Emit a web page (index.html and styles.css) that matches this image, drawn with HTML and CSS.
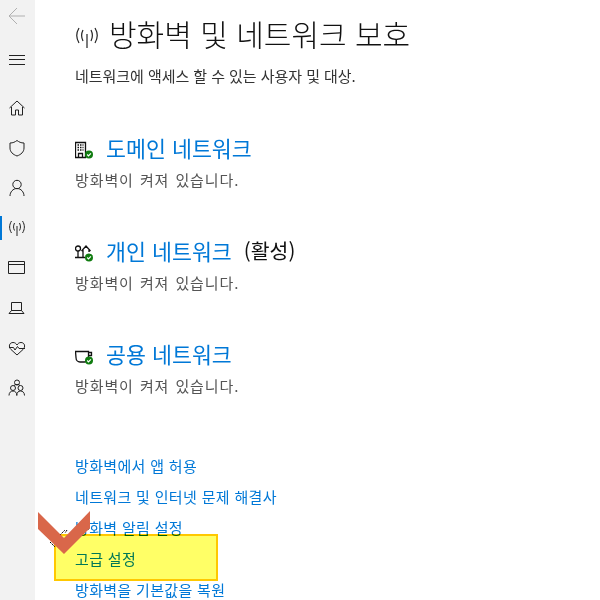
FILE: index.html
```html
<!DOCTYPE html>
<html lang="ko">
<head>
    <meta charset="UTF-8">
    <title>방화벽 및 네트워크 보호</title>
    <link rel="stylesheet" href="styles.css">
</head>
<body>
    <nav class="sidebar">
        <svg class="nav-icon back" viewBox="0 0 20 20"><path d="M18 10H2M10 2l-8 8 8 8"/></svg>
        <svg class="nav-icon menu" viewBox="0 0 18 18"><path d="M1 3.500h16M1 7.500h16M1 12.500h16"/></svg>
        <svg class="nav-icon home" viewBox="0 0 18 18"><path d="M1.500 9l7.500-7 7.500 7M3.500 8v8h4v-5h3v5h4V8"/></svg>
        <svg class="nav-icon" viewBox="0 0 18 18"><path d="M2 4c3 0 5-1 7-2.500C11 3 13 4 16 4v5c0 4-3 6.500-7 8-4-1.500-7-4-7-8z"/></svg>
        <svg class="nav-icon" viewBox="0 0 18 18"><circle cx="9" cy="5.500" r="4.200"/><path d="M2 17c0-4 3-7.500 7-7.500s7 3.500 7 7.500"/></svg>
        <div class="nav-active"><svg class="nav-icon" viewBox="0 0 18 18"><path d="M9 7v10M6.500 4c-1.300 3-1.300 5 0 7.500M11.500 4c1.300 3 1.300 5 0 7.500M3.500 2c-2.500 4-2.500 8 0 12M14.500 2c2.500 4 2.500 8 0 12"/></svg></div>
        <svg class="nav-icon" viewBox="0 0 18 18"><path d="M.5 2.500h16v12H.5zM.5 5.500h16"/></svg>
        <svg class="nav-icon" viewBox="0 0 18 18"><path d="M3.500 3.500h10v8h-10zM1 14.500h15l-2.500-3h-10z"/></svg>
        <svg class="nav-icon" viewBox="0 0 18 18"><path d="M9 16L3 10.500C0 7.500 1.500 3.500 5 3.500c2 0 3 1 4 2.500 1-1.500 2-2.500 4-2.500 3.500 0 5 4 2 7zM1 8.500h4.500L7 11l2.500-3.500L11 9.500h6"/></svg>
        <svg class="nav-icon" viewBox="0 0 18 18"><circle cx="9" cy="3.500" r="2.500"/><circle cx="5" cy="9" r="2.500"/><circle cx="12.500" cy="9" r="2.500"/><path d="M1 16.500c0-3 1.800-4.500 4-4.500s3.800 1.500 3.800 4.500M8.800 16.500c0-3 1.500-4.500 3.700-4.500s4 1.500 4 4.500M6 6.500c.8-.7 1.700-1 3-1s2.200.3 3 1"/></svg>
    </nav>

    <main class="content">
        <h1 class="page-title">
            <svg class="title-icon" viewBox="0 0 24 24"><path d="M12 9v14M8 5c-2 4-2 7 0 11M16 5c2 4 2 7 0 11M4 3c-3 5-3 10 0 15M20 3c3 5 3 10 0 15"/></svg>
            방화벽 및 네트워크 보호
        </h1>
        <p class="page-desc">네트워크에 액세스 할 수 있는 사용자 및 대상.</p>

        <section class="network">
            <h2 class="network-name">
                <span class="net-icon">
                    <svg viewBox="0 0 18 18"><path class="line" d="M.5 1.500h10v15H.5zM3.500 16.500v-4h4v4"/><path class="line" d="M2.500 4h6M2.500 6.500h6M2.500 9h6" stroke-dasharray="1.500 1"/><circle class="ok" cx="14" cy="13.500" r="4"/><path class="tick" d="M12.200 13.500l1.300 1.300 2.400-2.400"/></svg>
                </span>
                <a href="#">도메인 네트워크</a>
            </h2>
            <p class="network-state">방화벽이 켜져 있습니다.</p>
        </section>

        <section class="network">
            <h2 class="network-name">
                <span class="net-icon">
                    <svg viewBox="0 0 18 18"><circle class="line" cx="3" cy="4.500" r="2.500"/><path class="line" d="M3 7v6M0 13.500h10M6.500 7l4.500-5 4.500 5M8 6v7M14 6v2"/><circle class="ok" cx="14" cy="13.500" r="4"/><path class="tick" d="M12.200 13.500l1.300 1.300 2.400-2.400"/></svg>
                </span>
                <a href="#">개인 네트워크</a>
                <span class="active-tag">(활성)</span>
            </h2>
            <p class="network-state">방화벽이 켜져 있습니다.</p>
        </section>

        <section class="network">
            <h2 class="network-name">
                <span class="net-icon">
                    <svg viewBox="0 0 18 18"><path class="line" d="M.5 4.500h13v6c0 3-2 4.500-4 4.500H5c-2 0-4-1.500-4-4.500zM13.500 5.500h3v3h-3"/><circle class="ok" cx="14" cy="13.500" r="4"/><path class="tick" d="M12.200 13.500l1.300 1.300 2.400-2.400"/></svg>
                </span>
                <a href="#">공용 네트워크</a>
            </h2>
            <p class="network-state">방화벽이 켜져 있습니다.</p>
        </section>

        <ul class="links">
            <li><a href="#">방화벽에서 앱 허용</a></li>
            <li><a href="#">네트워크 및 인터넷 문제 해결사</a></li>
            <li><a href="#">방화벽 알림 설정</a></li>
            <li><a href="#">고급 설정</a></li>
            <li><a href="#">방화벽을 기본값을 복원</a></li>
        </ul>
    </main>

    <div class="highlight"></div>
    <svg class="chevron" viewBox="0 0 52 44">
        <path class="marks" d="M12 31l5 5M22 24l5-5M29 19l-2 3M45 22l7-5"/>
        <path d="M0 1l26 26L52 0v17L26 43 0 18z"/>
    </svg>
</body>
</html>
```

FILE: styles.css
```css
* {
    box-sizing: border-box;
    margin: 0;
    padding: 0;
}

html, body {
    height: 100%;
    overflow: hidden;
}

body {
    display: flex;
    background: white;
    font-family: "Noto Sans CJK KR", "Noto Sans", sans-serif;
    color: #333;
}

a {
    color: #0078d7;
    text-decoration: none;
}

.sidebar {
    flex: none;
    width: 35px;
    height: 100%;
    background: #f2f2f2;
    display: flex;
    flex-direction: column;
    align-items: center;
    padding: 6px 1px 0 0;
    gap: 22px;
}

.nav-icon {
    display: block;
    width: 18px;
    height: 18px;
    fill: none;
    stroke: #222;
    stroke-width: 1;
}

.nav-icon.back {
    stroke: #b0b0b0;
    width: 20px;
    height: 20px;
}

.nav-icon.menu {
    margin-top: 4px;
    margin-bottom: 7px;
}

.nav-active {
    align-self: stretch;
    display: flex;
    justify-content: center;
    align-items: center;
    height: 24px;
    margin: -3px 0;
    border-left: 2px solid #0078d7;
    padding-right: 2px;
}

.content {
    flex: 1;
    padding: 11px 0 0 40px;
}

.page-title {
    display: flex;
    align-items: center;
    gap: 10px;
    height: 44px;
    font-size: 30px;
    font-weight: 300;
    color: #111;
}

.title-icon {
    width: 24px;
    height: 24px;
    margin-top: 7px;
    fill: none;
    stroke: #222;
    stroke-width: 1.2;
}

.page-desc {
    margin-top: 9px;
    font-size: 15px;
    line-height: 24px;
    letter-spacing: -0.05px;
}

.network {
    margin-top: 43px;
}

.network + .network {
    margin-top: 42px;
}

.network-name {
    display: flex;
    align-items: center;
    height: 32px;
    font-size: 21.7px;
    font-weight: 400;
}

.net-icon {
    width: 31px;
    height: 18px;
    margin-top: 6px;
}

.net-icon svg {
    display: block;
    width: 18px;
    height: 18px;
}

.net-icon .line {
    fill: none;
    stroke: #111;
    stroke-width: 1.3;
}

.net-icon .ok {
    fill: #107c10;
}

.net-icon .tick {
    fill: none;
    stroke: white;
    stroke-width: 1.2;
}

.active-tag {
    margin-left: 12px;
    font-size: 20.5px;
    color: #111;
}

.network-state {
    margin-top: 5px;
    font-size: 15px;
    line-height: 24px;
    letter-spacing: 0.9px;
    word-spacing: 1px;
    color: #555;
}

.links {
    list-style: none;
    margin-top: 52px;
    font-size: 15px;
    line-height: 31px;
    letter-spacing: 0.33px;
}

.highlight {
    position: absolute;
    left: 54px;
    top: 534px;
    width: 164px;
    height: 47px;
    background: #ffff66;
    border: 2px solid #ffc800;
    mix-blend-mode: multiply;
}

.chevron {
    position: absolute;
    left: 38px;
    top: 511px;
    width: 52px;
    height: 44px;
    fill: #d9674a;
}

.chevron .marks {
    fill: none;
    stroke: #000;
    stroke-dasharray: 2 1;
}
```
